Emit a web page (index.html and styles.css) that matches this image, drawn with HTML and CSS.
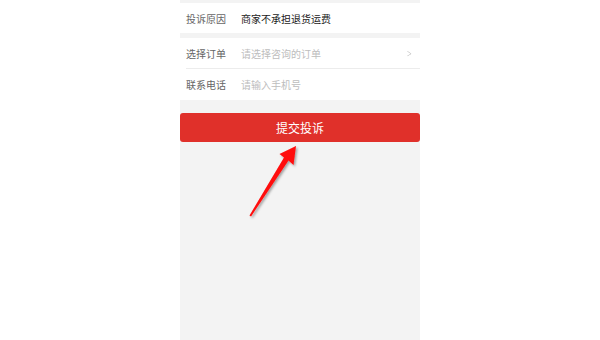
FILE: index.html
```html
<!DOCTYPE html>
<html lang="zh">
<head>
<meta charset="utf-8">
<link rel="stylesheet" href="styles.css">
</head>
<body>
<div class="phone">
  <div class="section">
    <div class="row r1"><span class="label">投诉原因</span><span class="value">商家不承担退货运费</span></div>
  </div>
  <div class="section s2">
    <div class="row r2 divided"><span class="label">选择订单</span><span class="value ph">请选择咨询的订单</span><span class="chev">&gt;</span></div>
    <div class="row r3"><span class="label">联系电话</span><span class="value ph">请输入手机号</span></div>
  </div>
  <div class="btn">提交投诉</div>
  <svg class="arrow" width="80" height="90" viewBox="0 0 80 90">
    <defs>
      <filter id="sh" x="-20%" y="-20%" width="140%" height="140%">
        <feDropShadow dx="1.5" dy="1.5" stdDeviation="1" flood-color="#000" flood-opacity="0.35"/>
      </filter>
    </defs>
    <g transform="translate(-240,-140)" filter="url(#sh)">
      <polygon points="296,146 293.5,165 288.5,160.5 251,216.5 249.5,215.5 284,157.5 279.5,154" fill="#ff0a0a"/>
    </g>
  </svg>
</div>
</body>
</html>
```

FILE: styles.css
```css
html, body {
  margin: 0;
  padding: 0;
  background: #ffffff;
}
body {
  font-family: "Noto Sans CJK SC", "Noto Sans", sans-serif;
}
.phone {
  position: relative;
  width: 240px;
  height: 340px;
  margin: 0 auto;
  background: #f3f3f3;
  padding-top: 3px;
  box-sizing: border-box;
}
.section {
  background: #ffffff;
}
.s2 {
  margin-top: 5px;
}
.row {
  display: flex;
  align-items: center;
  padding-left: 6px;
  padding-right: 7px;
  font-size: 10px;
  position: relative;
}
.r1 { height: 30px; }
.r2 { height: 31px; }
.r3 { height: 31px; }
.divided::after {
  content: "";
  position: absolute;
  left: 6px;
  right: 0;
  bottom: 0;
  height: 1px;
  background: #ececec;
}
.label {
  color: #666666;
  width: 55px;
  flex: none;
}
.value {
  color: #1a1a1a;
  flex: 1;
}
.ph {
  color: #bdbdbd;
}
.chev {
  color: #b0b0b0;
  font-size: 10px;
  font-family: "DejaVu Sans", sans-serif;
  font-weight: 200;
  transform: scaleX(0.6);
}
.btn {
  margin-top: 13px;
  height: 29px;
  border-radius: 3px;
  background: #e0302a;
  color: #ffffff;
  font-size: 12px;
  display: flex;
  align-items: center;
  justify-content: center;
}
.arrow {
  position: absolute;
  left: 60px;
  top: 140px;
}
```
